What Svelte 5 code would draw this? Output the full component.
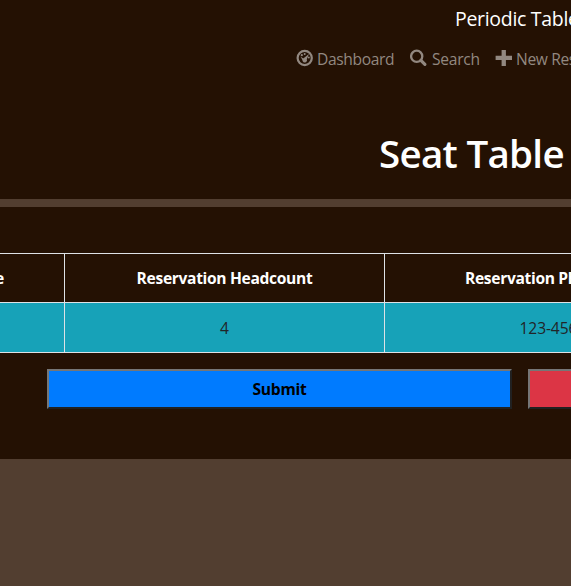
<script>
  const headings = ['Reservation Date', 'Reservation Headcount', 'Reservation Phone Number'];
  const values = ['', '4', '123-456-7890'];
</script>

<div class="page">
  <header>
    <div class="brand">Periodic Tables</div>
    <nav>
      <a class="dash">
        <svg width="18" height="18" viewBox="0 0 18 18">
          <circle cx="8.7" cy="9" r="7.1" fill="none" stroke="currentColor" stroke-width="2.2" />
          <g fill="currentColor">
            <circle cx="8.7" cy="5" r="1" />
            <circle cx="5.8" cy="6.2" r="1.1" />
            <circle cx="12.8" cy="8.6" r="1" />
            <path d="M12.9 5 L10.8 10.2 A2.3 2.3 0 1 1 7.6 9.2 Z" />
            <path d="M4.3 7.6 L8.6 10.2 L7.4 12.2 Z" />
          </g>
        </svg>
        <span>Dashboard</span>
      </a>
      <a class="search">
        <svg width="18" height="18" viewBox="0 0 18 18">
          <circle cx="6.7" cy="7.3" r="5.6" fill="none" stroke="currentColor" stroke-width="2.3" />
          <path d="M10.9 11.4 L14.9 15.3" stroke="currentColor" stroke-width="3.2" stroke-linecap="round" />
        </svg>
        <span>Search</span>
      </a>
      <a class="new">
        <svg width="18" height="18" viewBox="0 0 18 18">
          <path d="M6.6 1h4.3v5.7H17V11h-6.1v6H6.6v-6H.6V6.7h6z" fill="currentColor" />
        </svg>
        <span>New Reservation</span>
      </a>
    </nav>
    <h1>Seat Table</h1>
  </header>
  <main>
    <div class="table">
      {#each headings as heading, i}
        <div class="cell head" class:first={i === 0}><span>{heading}</span></div>
      {/each}
      {#each values as value}
        <div class="cell"><span>{value}</span></div>
      {/each}
    </div>
    <div class="actions">
      <button class="submit">Submit</button>
      <button class="cancel" aria-label="Cancel"></button>
    </div>
  </main>
</div>

<style>
  :global(body) { background: #523e30; overflow: hidden; }
  .page {
    width: 571px;
    height: 586px;
    overflow: hidden;
    background: #523e30;
    color: #fff;
    font: 15.6px/24px "Open Sans", "Noto Sans", sans-serif;
    white-space: nowrap;
  }
  header { height: 199px; background: #241103; box-sizing: border-box; padding-top: 4px; overflow: hidden; }
  .brand { margin-left: 455px; font-size: 19.5px; line-height: 30px; letter-spacing: -0.3px; }
  nav { display: flex; margin-top: 13px; padding-left: 296px; color: #928880; }
  a { display: flex; flex: none; height: 24px; }
  svg { flex: none; margin-top: 2px; }
  a span { margin-left: 3px; letter-spacing: -0.36px; }
  .dash { width: 114px; }
  .search { width: 85px; }
  .search span { margin-left: 4px; letter-spacing: -0.25px; }
  h1 { margin: 58px 0 0 379px; font-size: 38.5px; font-weight: 600; line-height: 48px; letter-spacing: -0.7px; }
  main { height: 252px; margin-top: 8px; background: #241103; box-sizing: border-box; padding-top: 46px; }
  .table {
    display: grid;
    width: 753px;
    grid-template-columns: 65px 320px 368px;
    grid-template-rows: 49px 50px;
    border-top: 1px solid #dee2e6;
  }
  .cell {
    display: flex;
    justify-content: center;
    align-items: center;
    box-sizing: border-box;
    border-right: 1px solid #dee2e6;
    border-bottom: 1px solid #dee2e6;
    background: #17a2b8;
    color: #212529;
    letter-spacing: -0.1px;
  }
  .head { background: #241103; color: #fff; font-weight: 700; letter-spacing: -0.33px; }
  .first { justify-content: flex-end; padding-right: 60px; overflow: hidden; }
  .actions { display: flex; gap: 16px; margin: 16px 0 0 47px; }
  button {
    flex: none;
    width: 465px;
    height: 40px;
    box-sizing: border-box;
    padding: 0;
    border: 2px solid;
    border-color: #767676 #212121 #212121 #767676;
    color: #000;
    font: inherit;
    font-weight: 700;
    letter-spacing: -0.25px;
  }
  .submit { background: #007bff; }
  .cancel { background: #dc3545; }
</style>
